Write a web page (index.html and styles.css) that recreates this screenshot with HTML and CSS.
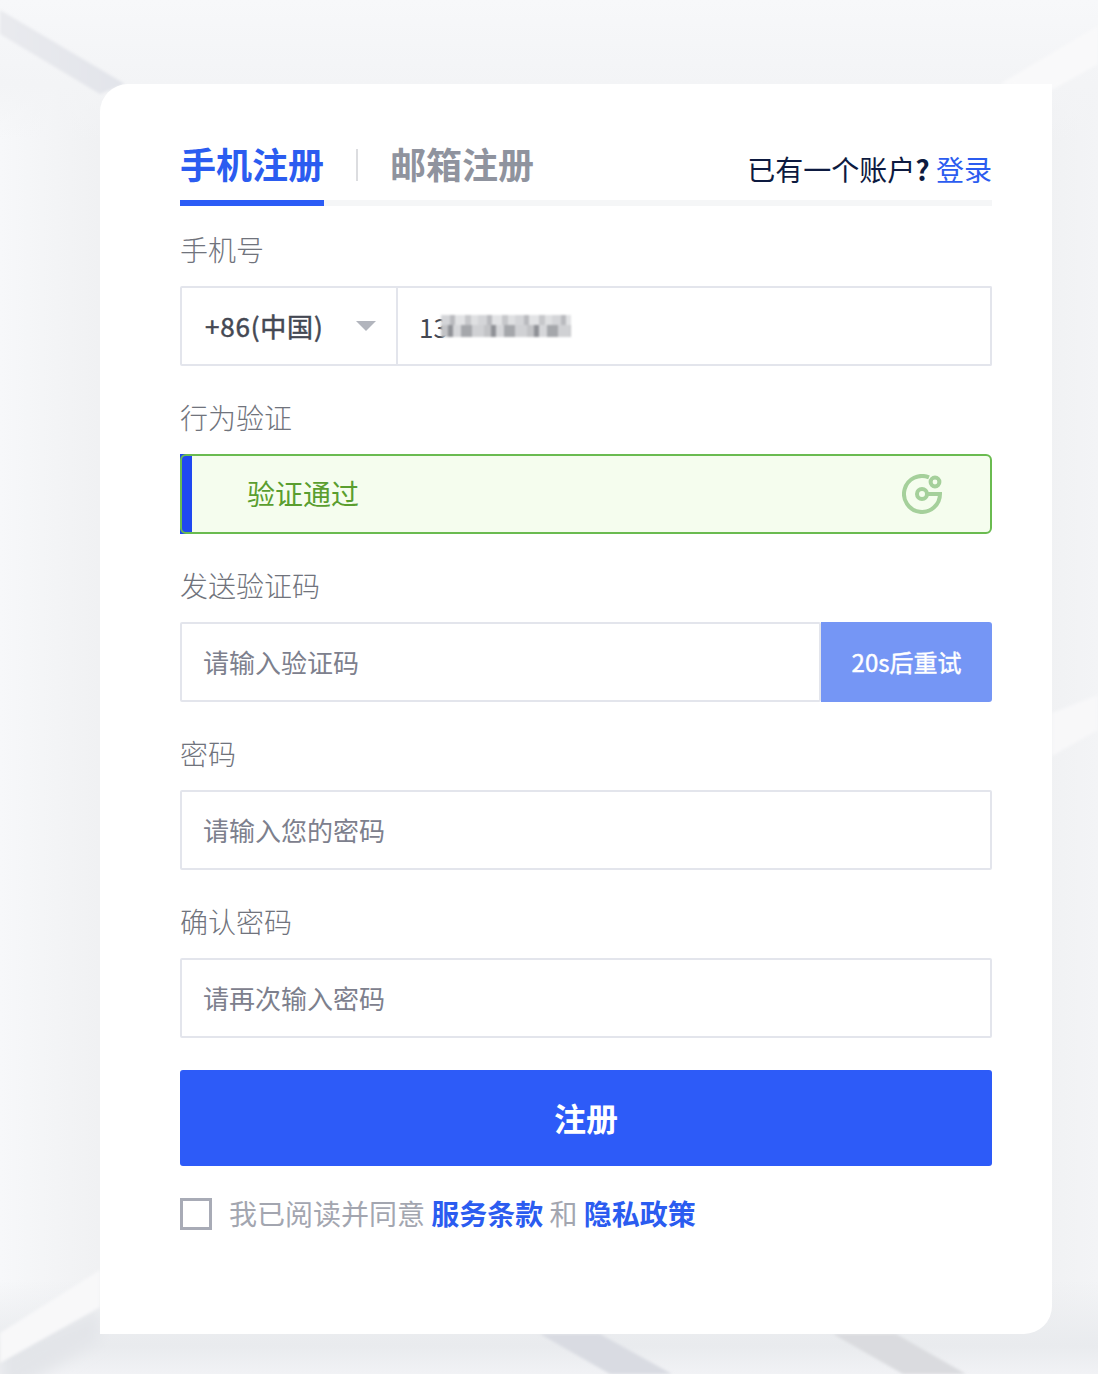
FILE: index.html
```html
<!DOCTYPE html>
<html lang="zh-CN">
<head>
    <meta charset="UTF-8">
    <meta name="viewport" content="width=device-width, initial-scale=1.0">
    <title>手机注册</title>
    <link rel="stylesheet" href="styles.css">
</head>
<body>
    <!-- Background bands -->
    <svg class="page-bg" width="1098" height="1374" viewBox="0 0 1098 1374">
        <defs>
            <linearGradient id="bg-across" x1="0" y1="0" x2="1" y2="0">
                <stop offset="0" stop-color="#f7f8fa"/>
                <stop offset="0.09" stop-color="#f0f1f3"/>
                <stop offset="0.95" stop-color="#f0f1f3"/>
                <stop offset="1" stop-color="#f3f4f6"/>
            </linearGradient>
            <linearGradient id="bg-top" x1="0" y1="0" x2="0" y2="1">
                <stop offset="0" stop-color="#f7f8fa"/>
                <stop offset="0.6" stop-color="#f3f4f6"/>
                <stop offset="1" stop-color="#f3f4f6" stop-opacity="0"/>
            </linearGradient>
            <linearGradient id="bg-bottom" x1="0" y1="0" x2="0" y2="1">
                <stop offset="0" stop-color="#e9ebee" stop-opacity="0"/>
                <stop offset="0.7" stop-color="#e9ebee"/>
                <stop offset="1" stop-color="#f1f2f5"/>
            </linearGradient>
            <linearGradient id="bg-fade" x1="0" y1="0" x2="1" y2="0">
                <stop offset="0" stop-color="#e9eaee"/>
                <stop offset="1" stop-color="#e2e4ea"/>
            </linearGradient>
            <filter id="soft"><feGaussianBlur stdDeviation="1.5"/></filter>
            <filter id="softer"><feGaussianBlur stdDeviation="7"/></filter>
        </defs>
        <rect width="1098" height="1374" fill="url(#bg-across)"/>
        <rect width="1098" height="140" fill="url(#bg-top)"/>
        <rect y="1280" width="1098" height="94" fill="url(#bg-bottom)"/>
        <polygon points="0,10 125,84 100,94 0,34" fill="url(#bg-fade)" filter="url(#soft)"/>
        <polygon points="1000,84 1098,26 1098,64 1052,90" fill="#f9f9fa" filter="url(#soft)"/>
        <polygon points="1052,713 1098,695 1098,730 1052,756" fill="#f8f8f9" filter="url(#soft)"/>
        <polygon points="0,1350 100,1310 100,1340 0,1400" fill="#e3e5e9" filter="url(#softer)"/>
        <polygon points="0,1333 100,1270 100,1307 0,1363" fill="#f8f8f9" filter="url(#soft)"/>
        <polygon points="540,1334 600,1334 672,1374 610,1374" fill="#d9dbe2" filter="url(#soft)"/>
        <polygon points="833,1334 896,1334 966,1374 903,1374" fill="#dadbdf" filter="url(#soft)"/>
    </svg>

    <div class="card">
        <div class="tabs">
            <a href="#" class="tab active">手机注册</a>
            <span class="tab-sep"></span>
            <a href="#" class="tab">邮箱注册</a>
            <p class="have-account">已有一个账户<b>?</b> <a href="#" class="link">登录</a></p>
        </div>

        <div class="field first">
            <label class="field-label">手机号</label>
            <div class="row">
                <div class="area-select">
                    <span class="area-code">+86(中国)</span>
                    <i class="caret"></i>
                </div>
                <div class="phone-value">
                    <span>13</span>
                    <span class="phone-blur"></span>
                </div>
            </div>
        </div>

        <div class="field">
            <label class="field-label">行为验证</label>
            <div class="verify-track">
                <div class="verify-pass">
                    <span class="verify-text">验证通过</span>
                    <svg class="verify-icon" width="40" height="40" viewBox="0 0 40 40" fill="none" stroke="#a5d09b" stroke-width="4">
                        <path d="M27 3.4A18 18 0 1 0 38 20H25.5"/>
                        <circle cx="20" cy="20" r="5"/>
                        <circle cx="33" cy="8" r="4.4"/>
                    </svg>
                </div>
            </div>
        </div>

        <div class="field">
            <label class="field-label">发送验证码</label>
            <div class="row">
                <input class="text-input" type="text" placeholder="请输入验证码">
                <button class="retry-btn" type="button">20s后重试</button>
            </div>
        </div>

        <div class="field">
            <label class="field-label">密码</label>
            <input class="text-input" type="password" placeholder="请输入您的密码">
        </div>

        <div class="field">
            <label class="field-label">确认密码</label>
            <input class="text-input" type="password" placeholder="请再次输入密码">
        </div>

        <button class="submit-btn" type="button">注册</button>

        <div class="agree">
            <input class="agree-check" type="checkbox">
            <p>我已阅读并同意 <a href="#" class="strong-link">服务条款</a> 和 <a href="#" class="strong-link">隐私政策</a></p>
        </div>
    </div>
</body>
</html>
```

FILE: styles.css
```css
html, body {
    margin: 0;
    padding: 0;
}

body {
    position: relative;
    width: 1098px;
    height: 1374px;
    overflow: hidden;
    box-sizing: border-box;
    padding: 84px 0 0 100px;
    font-family: "Noto Sans CJK SC", "Noto Sans", sans-serif;
    background: #f3f4f6;
}

a {
    text-decoration: none;
}

p {
    margin: 0;
}

.page-bg {
    position: absolute;
    top: 0;
    left: 0;
}

.card {
    position: relative;
    box-sizing: border-box;
    width: 952px;
    height: 1250px;
    padding: 60px 60px 0 80px;
    background: #fff;
    border-radius: 28px 0 28px 0;
}

/* Tabs */
.tabs {
    display: flex;
    align-items: flex-start;
    height: 62px;
    box-sizing: border-box;
    border-bottom: 6px solid #f5f6f7;
}

.tab {
    height: 62px;
    box-sizing: border-box;
    font-size: 36px;
    line-height: 38px;
    font-weight: 700;
    color: #8f939e;
}

.tab.active {
    color: #2b5cf0;
    border-bottom: 6px solid #2b5cf6;
}

.tab-sep {
    width: 2px;
    height: 32px;
    margin: 5px 32px 0 32px;
    background: #dcdde0;
}

.have-account {
    margin-left: auto;
    margin-top: 3px;
    font-size: 28px;
    line-height: 44px;
    color: #0d1a40;
}

.link {
    color: #2b5cf0;
}

/* Form */
.field {
    margin-top: 32px;
}

.field.first {
    margin-top: 24px;
}

.field-label {
    display: block;
    height: 38px;
    margin-bottom: 18px;
    font-size: 28px;
    line-height: 38px;
    font-weight: 300;
    color: #70737c;
}

.row {
    display: flex;
    height: 80px;
}

.text-input {
    display: block;
    flex: 1;
    width: 100%;
    min-width: 0;
    height: 80px;
    box-sizing: border-box;
    padding: 0 21px 2px;
    border: 2px solid #e3e5ec;
    border-radius: 2px;
    outline: none;
    font-family: inherit;
    font-size: 26px;
    color: #3a3f4d;
}

.text-input::placeholder {
    color: #7d808d;
    opacity: 1;
}

.area-select {
    display: flex;
    align-items: center;
    justify-content: space-between;
    width: 218px;
    box-sizing: border-box;
    padding: 0 20px 0 23px;
    border: 2px solid #e3e5ec;
    border-radius: 2px 0 0 2px;
    font-size: 26px;
    color: #444853;
}

.area-code {
    padding-bottom: 2px;
    letter-spacing: 0.8px;
    -webkit-text-stroke: 0.5px #444853;
}

.caret {
    width: 0;
    height: 0;
    border-top: 10px solid #b2b5bd;
    border-left: 10px solid transparent;
    border-right: 10px solid transparent;
}

.phone-value {
    flex: 1;
    display: flex;
    align-items: center;
    box-sizing: border-box;
    padding-left: 21px;
    border: 2px solid #e3e5ec;
    border-left: none;
    border-radius: 0 2px 2px 0;
    font-size: 26px;
    color: #444853;
}

/* Masked phone digits */
.phone-blur {
    width: 130px;
    height: 22px;
    margin-left: -7px;
    background:
        repeating-linear-gradient(90deg, #d4d5d8 0 9px, #b9babe 9px 14px, #e2e3e5 14px 24px, #c6c7ca 24px 30px, #dfe0e2 30px 37px) top / 100% 10px no-repeat,
        repeating-linear-gradient(90deg, #c2c3c6 0 7px, #8f9196 7px 12px, #d6d7da 12px 20px, #a5a7ab 20px 31px, #d0d1d4 31px 43px) bottom / 100% 12px no-repeat;
    filter: blur(0.8px);
}

/* Behaviour check */
.verify-track {
    height: 80px;
    background: linear-gradient(90deg, #1f48f0 12px, transparent 12px);
}

.verify-pass {
    display: flex;
    align-items: center;
    justify-content: space-between;
    height: 80px;
    box-sizing: border-box;
    padding: 0 48px 0 65px;
    border: 2px solid #6abb50;
    border-radius: 6px;
    background: linear-gradient(90deg, transparent 10px, #f5fdee 10px);
    background-origin: padding-box;
    font-size: 28px;
    color: #5a9e2f;
}

.verify-text {
    padding-bottom: 2px;
}

.retry-btn {
    flex: 0 0 171px;
    padding: 0 0 2px;
    border: none;
    border-radius: 0 3px 3px 0;
    background: #7596f5;
    font-family: inherit;
    font-size: 24px;
    color: #fff;
    -webkit-text-stroke: 0.4px #fff;
}

.submit-btn {
    display: block;
    width: 100%;
    height: 96px;
    margin-top: 32px;
    padding: 0 0 3px;
    border: none;
    border-radius: 3px;
    background: #2d5bf8;
    font-family: inherit;
    font-size: 32px;
    font-weight: 700;
    color: #fff;
}

/* Terms */
.agree {
    display: flex;
    align-items: center;
    margin-top: 32px;
    font-size: 28px;
    line-height: 32px;
    color: #a3a6b0;
}

.agree p {
    margin-top: -2px;
}

.agree-check {
    appearance: none;
    width: 32px;
    height: 32px;
    box-sizing: border-box;
    margin: 0 17px 0 0;
    border: 3px solid #a8abb6;
    background: #fff;
}

.strong-link {
    font-weight: 700;
    color: #2b5cf0;
}
```
